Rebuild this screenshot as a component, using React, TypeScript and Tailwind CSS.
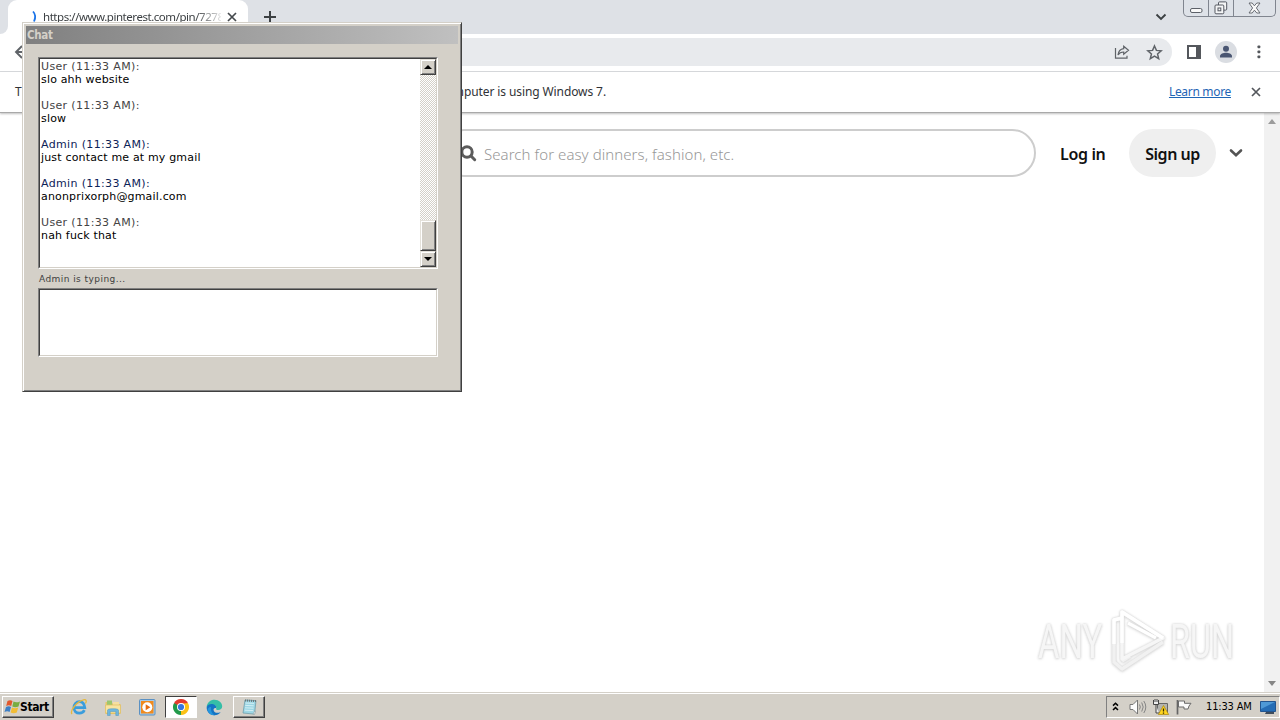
import type { ReactNode } from "react";

const messages = [
  { who: "User", text: "slo ahh website" },
  { who: "User", text: "slow" },
  { who: "Admin", text: "just contact me at my gmail" },
  { who: "Admin", text: "anonprixorph@gmail.com" },
  { who: "User", text: "nah fuck that" },
];

function Cross({ className }: { className: string }) {
  return (
    <svg viewBox="0 0 10 10" className={className} fill="none" stroke="currentColor" strokeWidth="1.7">
      <path d="M1 1l8 8M9 1l-8 8" />
    </svg>
  );
}

function WindowControls() {
  return (
    <div className="absolute top-0 right-[4px] flex h-[17px] w-[93px] rounded-b-[5px] border border-t-0 border-[#80858f] bg-[#dee2e8]">
      <div className="flex w-[25px] items-end justify-center border-r border-[#80858f] pb-[3px]">
        <svg width="13" height="5" viewBox="0 0 13 5">
          <rect x="0.5" y="0.5" width="11.5" height="4" rx="1.5" fill="#f8f8f8" stroke="#5c6068" />
        </svg>
      </div>
      <div className="flex w-[25px] items-end justify-center border-r border-[#80858f] pb-[1px]">
        <svg width="14" height="14" viewBox="0 0 14 14" fill="#f4f5f6" stroke="#545861">
          <rect x="4.5" y="0.9" width="8.2" height="8.2" rx="1" />
          <rect x="1" y="4" width="8.8" height="8.8" rx="1" />
          <rect x="4" y="7" width="2.8" height="2.8" />
        </svg>
      </div>
      <div className="flex flex-1 items-end justify-center pb-[2px]">
        <svg width="13" height="12" viewBox="0 0 13 12" fill="#f8f8f8" stroke="#5c6068" strokeWidth="0.9">
          <path d="M1 1h3.2l2.2 2.8L8.8 1H12L8.4 6l3.6 5H8.800L6.400 8.200 4.200 11H1l3.600-5z" />
        </svg>
      </div>
    </div>
  );
}

function TabStrip() {
  return (
    <div className="relative flex h-[34px] bg-[#dee1e6]">
      <div className="w-2 bg-white">
        <div className="h-full rounded-br-lg bg-[#dee1e6]" />
      </div>
      <div className="flex h-full w-[240px] rounded-t-[9px] bg-white pl-[17px]">
        <svg width="16" height="16" viewBox="0 0 16 16" className="mt-[9px] shrink-0" fill="none" stroke="#1a73e8" strokeWidth="1.8">
          <path d="M8 2.5c2.4 2.5 2.6 6.500 1 10" />
        </svg>
        <div className="mt-[9px] ml-[2px] w-[178px] font-['Noto_Sans','Open_Sans',sans-serif] text-[11.5px] leading-[16px] tracking-[-0.46px] whitespace-nowrap text-[#3c4043] [mask-image:linear-gradient(to_right,black_152px,transparent_182px)]">
          https://www.pinterest.com/pin/7278
        </div>
        <Cross className="mt-[12px] ml-[6px] h-[10px] w-[10px] text-[#45494d]" />
      </div>
      <svg width="14" height="14" viewBox="0 0 14 14" className="mt-[10px] ml-[15px]" stroke="#3c4043" strokeWidth="2">
        <path d="M7 1v12M1 7h12" />
      </svg>
      <svg width="12" height="8" viewBox="0 0 12 8" className="mt-[13px] mr-[113px] ml-auto" fill="none" stroke="#3c4043" strokeWidth="1.9">
        <path d="M1.500 1.500L6 6l4.500-4.500" />
      </svg>
      <WindowControls />
    </div>
  );
}

function Toolbar() {
  return (
    <div className="flex h-[38px] items-center border-b border-[#d9dbde] bg-white pb-[1px] pl-[14px]">
      <svg width="16" height="16" viewBox="0 0 16 16" fill="none" stroke="#5f6368" strokeWidth="1.9">
        <path d="M15 8H2M8 2L2 8l6 6" />
      </svg>
      <div className="ml-[80px] flex h-[28px] w-[1062px] items-center justify-end rounded-full bg-[#e8eaed] pr-[9px]">
        <svg width="16" height="16" viewBox="0 0 16 16" fill="none" stroke="#5f6368" strokeWidth="1.2">
          <path d="M1.500 4v10.200h11.500v-2.500" />
          <path d="M9.700 2.300L14.500 6.300 9.700 10.300V8C7 8 5.200 9 4 11c.4-3.600 2.200-6 5.700-6.400z" />
        </svg>
        <svg width="17" height="17" viewBox="0 0 24 24" className="ml-[16px]" fill="none" stroke="#5f6368" strokeWidth="2.100">
          <path d="M12 2.800l2.700 6.200 6.700.6-5.100 4.400 1.600 6.600-5.900-3.500-5.900 3.500 1.600-6.600-5.100-4.400 6.700-.6z" />
        </svg>
      </div>
      <svg width="14" height="14" viewBox="0 0 14 14" className="ml-[15px]">
        <path d="M0 0h14v14H0zM2 2v10h7V2z" fill="#54575c" fillRule="evenodd" />
      </svg>
      <svg width="22" height="22" viewBox="0 0 22 22" className="ml-[14px]">
        <circle cx="11" cy="11" r="11" fill="#dadde2" />
        <circle cx="11" cy="7.700" r="3" fill="#4a5672" />
        <path d="M5 16.500v-1.300c0-2.300 3.500-3.400 6-3.400s6 1.100 6 3.400v1.300z" fill="#4a5672" />
      </svg>
      <svg width="4" height="16" viewBox="0 0 4 16" className="ml-[19.5px]" fill="#54575c">
        <rect x="0.500" y="1.500" width="2.800" height="2.800" rx="0.800" />
        <rect x="0.500" y="6.500" width="2.800" height="2.800" rx="0.800" />
        <rect x="0.500" y="11.500" width="2.800" height="2.800" rx="0.800" />
      </svg>
    </div>
  );
}

function InfoBar() {
  return (
    <div className="relative z-10 flex h-[41px] items-center border-b border-[#a9a9a9] bg-white pr-[19px] pl-[15px] font-['Noto_Sans','Open_Sans',sans-serif] text-[12px] text-[#303236] shadow-[0_1px_2px_rgba(0,0,0,0.25)]">
      <span>T</span>
      <div className="ml-auto flex w-[1159px] items-center">
        <div className="flex w-[504px] justify-end tracking-[-0.1px] whitespace-nowrap">
          <span>mputer is using Windows 7.</span>
        </div>
        <a className="ml-auto tracking-[-0.32px] text-[#1f65b5] underline">Learn more</a>
        <Cross className="ml-[20px] h-[10px] w-[10px] text-[#54575c]" />
      </div>
    </div>
  );
}

function Watermark() {
  return (
    <div className="absolute right-[29px] bottom-[16px] flex h-[70px] items-center gap-[4px] font-['Roboto',sans-serif] text-[49px] leading-none text-[#f6f6f6] [filter:drop-shadow(0_0_1px_#d2d2d2)_drop-shadow(0_1px_1px_#e2e2e2)]">
      <span className="w-[68px]">
        <span className="inline-block origin-left scale-x-[0.67]">ANY</span>
      </span>
      <svg width="56" height="64" viewBox="0 0 56 64" fill="none" strokeWidth="3.500" strokeLinejoin="round">
        <path d="M12 9L4 11v42l8 7 41-27M12 52l8-5" stroke="#f1f1f1" />
        <path d="M12 3v47l41-21z" stroke="#f6f6f6" />
        <path d="M4 35V11l8-2M12 34V3l41 26M18 14l28 15" stroke="#fff" />
      </svg>
      <span className="w-[65px]">
        <span className="inline-block origin-left scale-x-[0.66]">RUN</span>
      </span>
    </div>
  );
}

function PageContent() {
  return (
    <div className="flex h-[579px]">
      <main className="relative flex flex-1 items-start pt-[16px] font-['Noto_Sans','Open_Sans',sans-serif]">
        <div className="ml-[440px] flex h-[48px] w-[596px] items-center rounded-full border-2 border-[#cdcdcd] pl-[18px]">
          <svg width="17" height="17" viewBox="0 0 17 17" fill="none" stroke="#5c5c5c" strokeWidth="3">
            <circle cx="7" cy="7" r="5.200" />
            <path d="M11 11l3.700 3.700" strokeLinecap="round" />
          </svg>
          <span className="mt-[2px] ml-[7px] text-[15px] font-light tracking-[0.06px] whitespace-nowrap text-[#979797]">Search for easy dinners, fashion, etc.</span>
        </div>
        <div className="ml-[24px] flex h-[48px] w-[46px] items-center pt-[2px] text-[16px] font-semibold tracking-[-0.35px] whitespace-nowrap text-[#111]">Log in</div>
        <div className="ml-[23px] flex h-[48px] w-[87px] items-center justify-center rounded-full bg-[#efefef] pt-[2px] text-[16px] font-semibold tracking-[-0.5px] whitespace-nowrap text-[#111]">Sign up</div>
        <svg width="14" height="10" viewBox="0 0 14 10" className="mt-[19px] ml-[13px]" fill="none" stroke="#545454" strokeWidth="2.600" strokeLinecap="round">
          <path d="M2 2.500L7 7.200l5-4.700" />
        </svg>
        <Watermark />
      </main>
      <div className="flex w-[16px] flex-col items-center justify-between bg-[#f1f1f1] pt-[6px] pb-[6px]">
        <svg width="8" height="5" viewBox="0 0 8 5"><path d="M0 5l4-5 4 5z" fill="#9b9b9b" /></svg>
        <svg width="8" height="5" viewBox="0 0 8 5"><path d="M0 0l4 5 4-5z" fill="#858585" /></svg>
      </div>
    </div>
  );
}

function ArrowButton({ down = false }: { down?: boolean }) {
  return (
    <div className="flex h-[16px] w-[16px] shrink-0 items-center justify-center border border-t-[#e4e1da] border-r-[#404040] border-b-[#404040] border-l-[#e4e1da] bg-[#d4d0c8] shadow-[inset_1px_1px_#fff,inset_-1px_-1px_#808080]">
      <svg width="8" height="4" viewBox="0 0 8 4" className="mr-px">
        <path d={down ? "M0 0h8L4 4z" : "M0 4h8L4 0z"} fill="#000" />
      </svg>
    </div>
  );
}

function Sunken({ className, children }: { className: string; children?: ReactNode }) {
  return (
    <div className={`border border-t-[#808080] border-r-white border-b-white border-l-[#808080] ${className}`}>
      <div className="flex h-full border border-t-[#404040] border-r-[#d4d0c8] border-b-[#d4d0c8] border-l-[#404040] bg-white">{children}</div>
    </div>
  );
}

function ChatWindow() {
  return (
    <section className="absolute top-[22px] left-[22px] z-20 flex h-[370px] w-[440px] flex-col border border-t-[#d4d0c8] border-r-[#404040] border-b-[#404040] border-l-[#d4d0c8] bg-[#d4d0c8] p-[3px] font-['DejaVu_Sans',sans-serif] shadow-[inset_1px_1px_#fff,inset_-1px_-1px_#808080]">
      <header className="h-[18px] shrink-0 bg-linear-to-r from-[#808080] to-[#c0c0c0] pl-[1px] font-['DejaVu_Sans_Condensed','DejaVu_Sans',sans-serif] text-[11.5px] leading-[18px] font-bold tracking-[-0.3px] text-[#d4d0c8]">Chat</header>
      <div className="flex flex-col pt-[13px] pl-[12px]">
        <Sunken className="h-[212px] w-[400px]">
          <div className="flex flex-1 flex-col gap-[13px] pt-[1px] pl-[1px] text-[11px] leading-[13px] whitespace-nowrap">
            {messages.map((m, i) => (
              <div key={i}>
                <div className={m.who === "Admin" ? "tracking-[0.35px] text-[#0d2257]" : "tracking-[0.35px] text-[#444]"}>{m.who} (11:33 AM):</div>
                <div className="tracking-[0.17px] text-black">{m.text}</div>
              </div>
            ))}
          </div>
          <div className="flex w-[16px] flex-col bg-[repeating-conic-gradient(#fff_0_25%,#d4d0c8_0_50%)] bg-size-[2px_2px]">
            <ArrowButton />
            <div className="mt-auto h-[31px] border border-t-[#e4e1da] border-r-[#404040] border-b-[#404040] border-l-[#e4e1da] bg-[#d4d0c8] shadow-[inset_1px_1px_#fff,inset_-1px_-1px_#808080]" />
            <ArrowButton down />
          </div>
        </Sunken>
        <div className="h-[19px] pt-[1px] pl-[1px] text-[9px] leading-[19px] tracking-[0.44px] text-[#404040]">Admin is typing...</div>
        <Sunken className="h-[69px] w-[400px]" />
      </div>
    </section>
  );
}

function WindowsFlag() {
  return (
    <svg width="17" height="16" viewBox="0 0 17 16">
      <path d="M3.500 2C5.500.8 7 1 8.500 2L7.200 7C5.600 6 4 6 2.200 7z" fill="#e2582c" />
      <path d="M9.500 2.600c2 1 4 1 6.500-.2l-1.500 5c-2.200 1-4.200 1-6.200 0z" fill="#78ad42" />
      <path d="M2 8c2-1 3.500-1 5 0l-1.400 5C4 12 2.400 12 .5 13z" fill="#3d7fc5" />
      <path d="M8 8.400c2 1 4 1 6.200 0l-1.400 5c-2.200 1-4.200 1-6.200 0z" fill="#f2bd35" />
    </svg>
  );
}

function IeIcon() {
  return (
    <svg width="18" height="18" viewBox="0 0 18 18" fill="none">
      <path d="M4.500 9.600h10.300C14.300 5.800 12.300 3.700 9.500 3.700 6.200 3.700 3.900 6.200 3.900 9.600s2.200 5.600 5.600 5.600c2.400 0 4-1.100 4.900-3" stroke="#3a9ddc" strokeWidth="2.700" />
      <path d="M2 16C-.5 12.500 7 3.500 13.500 1.800c3.200-.7 3.200 1.600 1.900 3.700" stroke="#e5b83c" strokeWidth="1.300" />
    </svg>
  );
}

function FolderIcon() {
  return (
    <svg width="18" height="17" viewBox="0 0 18 17">
      <path d="M1.500 3h6L9 5h7.500v10h-15z" fill="#e6c567" />
      <path d="M3 1.500h5v5H3z" fill="#9cc66d" />
      <path d="M9 3h6v4H9z" fill="#f5dfa0" />
      <path d="M1.500 6h15v8h-15z" fill="#f7e4a0" stroke="#dfbd62" strokeWidth="0.700" />
      <path d="M3.500 16.500v-5.500c0-1.700 11-1.700 11 0v5.500h-2.700V12.500H6.200v4z" fill="#6fb6dd" stroke="#4c94c0" strokeWidth="0.500" />
    </svg>
  );
}

function PlayerIcon() {
  return (
    <svg width="17" height="17" viewBox="0 0 17 17">
      <rect x="0.500" y="0.500" width="15.500" height="15.500" rx="1" fill="#a7cbe9" stroke="#5b91c3" />
      <rect x="2" y="2" width="12.500" height="12.500" fill="#f08a1d" />
      <circle cx="8.300" cy="8.200" r="5" fill="#fff" />
      <path d="M6.700 5.200l4.700 3-4.700 3z" fill="#e56d11" />
    </svg>
  );
}

function ChromeIcon() {
  return (
    <svg width="16" height="16" viewBox="0 0 16 16">
      <path d="M8 8L1.070 4A8 8 0 0 1 14.930 4z" fill="#e33b2e" />
      <path d="M8 8L14.930 4A8 8 0 0 1 8 16z" fill="#fbc116" />
      <path d="M8 8v8A8 8 0 0 1 1.070 4z" fill="#229a4a" />
      <path d="M8 4h6.930L11.400 10z" fill="#fbc116" />
      <path d="M1.070 4L4.600 10 8 8 8 4z" fill="#229a4a" />
      <path d="M1.070 4H14.930L11 4.600 8 4.200 4.500 6z" fill="#e33b2e" />
      <circle cx="8" cy="8" r="4" fill="#fff" />
      <circle cx="8" cy="8" r="3.100" fill="#3576df" />
    </svg>
  );
}

function EdgeIcon() {
  return (
    <svg width="17" height="17" viewBox="0 0 17 17">
      <path d="M.7 8C1 3.500 4.500.8 8.500.8c4.500 0 7.700 3 7.700 6.500 0 2.500-1.800 3.700-4 3.700-1.800 0-2.500-.8-2-1.800C10.800 7.500 9 6 7 6 3.500 6 1.500 7 .7 8z" fill="#35bea7" />
      <path d="M.7 8C1.500 5.500 4.200 4.500 6.700 5c2.700.5 4 2.600 3.500 4-2-.4-3 .7-2.500 2.500.7 2.500 3.800 3 7 1.500-1.600 2.300-4 3.400-6.500 3.300C3.500 16 .4 12.500.7 8z" fill="#1474c4" />
      <path d="M5 8c-.6 3.500 1 7 4 8.200-3.300.4-6.500-1.600-7.400-5C1.400 9.500 3 8 5 8z" fill="#2596dd" />
    </svg>
  );
}

function NotepadIcon() {
  return (
    <svg width="17" height="18" viewBox="0 0 17 18">
      <path d="M4 2l11 .6-1.500 13.500L2 15z" fill="#9dd6e4" stroke="#6f9dab" strokeWidth="0.800" />
      <path d="M4.500 5l8.500.4M4.200 7.400l8.500.4M4 9.800l8.500.4M3.700 12.200l8.500.4" stroke="#d8f2f6" strokeWidth="0.900" />
      <path d="M4 2.500l11 .6" stroke="#6c7678" strokeWidth="2" strokeDasharray="1 1" />
      <path d="M12 16.300l1.800-3.300.7.200-1 3z" fill="#fff" stroke="#829298" strokeWidth="0.500" />
    </svg>
  );
}

function Tray() {
  return (
    <div className="ml-auto flex h-[22px] w-[174px] items-center border border-t-[#808080] border-r-white border-b-white border-l-[#808080]">
      <svg width="7" height="9" viewBox="0 0 7 9" className="mb-[2px] ml-[5px]" fill="none" stroke="#000" strokeWidth="1.500">
        <path d="M1 3.600L3.500 1.200 6 3.600M1 8l2.500-2.400L6 8" />
      </svg>
      <svg width="18" height="16" viewBox="0 0 18 16" className="ml-[10px]">
        <path d="M1 5.500h3L8.500 1v14L4 10.500H1z" fill="#fcfcfc" stroke="#777" />
        <path d="M10.500 5.500q1.600 2.500 0 5M12.700 3.500q3 4.500 0 9M14.800 2q4 6 0 12" fill="none" stroke="#858585" />
      </svg>
      <svg width="18" height="17" viewBox="0 0 18 17" className="ml-[5px]">
        <path d="M5.500 4.500h10v9h-10z" fill="#b4b4b0" stroke="#666" />
        <path d="M1.500 1v4.500h5V1M3 0v3M5 0v3M4 6v8h3" fill="#eee" stroke="#444" />
        <path d="M11.500 6.500l5.200 9H6.300z" fill="#ffd51f" stroke="#aa850d" strokeWidth="0.700" />
        <path d="M11.500 9.500v3M11.500 13.500v1.200" stroke="#362b00" strokeWidth="1.300" />
      </svg>
      <svg width="18" height="16" viewBox="0 0 18 16" className="ml-[5px]">
        <path d="M2.500 1v14.500" stroke="#666" strokeWidth="1.700" />
        <path d="M3.500 2h6v2.300h6.500L14 7l-1 3H9V8H3.500z" fill="#fafafa" stroke="#6b6b6b" />
      </svg>
      <span className="ml-[13px] w-[48px] font-['DejaVu_Sans_Condensed','DejaVu_Sans',sans-serif] text-[11px] tracking-[-0.15px] whitespace-nowrap text-black">11:33 AM</span>
      <svg width="16" height="15" viewBox="0 0 16 15" className="ml-[6px] shrink-0">
        <path d="M.5 1.500h15v10H.5z" fill="#256db5" stroke="#23558f" />
        <path d="M1 2h14L1 9z" fill="#4e99d6" />
        <path d="M6 12h8v2H5z" fill="#404d5c" />
      </svg>
    </div>
  );
}

function Taskbar() {
  return (
    <footer className="flex h-[28px] items-center border-t border-[#d4d0c8] bg-[#d4d0c8] pt-[1px] pl-[2px] shadow-[inset_0_1px_#fff]">
      <button className="flex h-[22px] w-[52px] items-center border border-t-white border-r-[#404040] border-b-[#404040] border-l-white pl-[1px] font-['DejaVu_Sans_Condensed','DejaVu_Sans',sans-serif] text-[12px] font-bold tracking-[-0.4px] text-black shadow-[inset_-1px_-1px_#808080]">
        <WindowsFlag />
        <span className="ml-[-1px]">Start</span>
      </button>
      <div className="ml-[16px]"><IeIcon /></div>
      <div className="ml-[16px]"><FolderIcon /></div>
      <div className="ml-[17px]"><PlayerIcon /></div>
      <div className="ml-[9px] flex h-[22px] w-[32px] items-center justify-center border border-t-[#404040] border-r-white border-b-white border-l-[#404040] bg-white"><ChromeIcon /></div>
      <div className="ml-[9px]"><EdgeIcon /></div>
      <div className="ml-[10px] flex h-[22px] w-[32px] items-center justify-center border border-t-white border-r-[#404040] border-b-[#404040] border-l-white shadow-[inset_-1px_-1px_#808080]"><NotepadIcon /></div>
      <Tray />
    </footer>
  );
}

export default function App() {
  return (
    <div className="relative flex h-[720px] w-[1280px] flex-col overflow-hidden bg-white">
      <TabStrip />
      <Toolbar />
      <InfoBar />
      <PageContent />
      <Taskbar />
      <ChatWindow />
    </div>
  );
}
